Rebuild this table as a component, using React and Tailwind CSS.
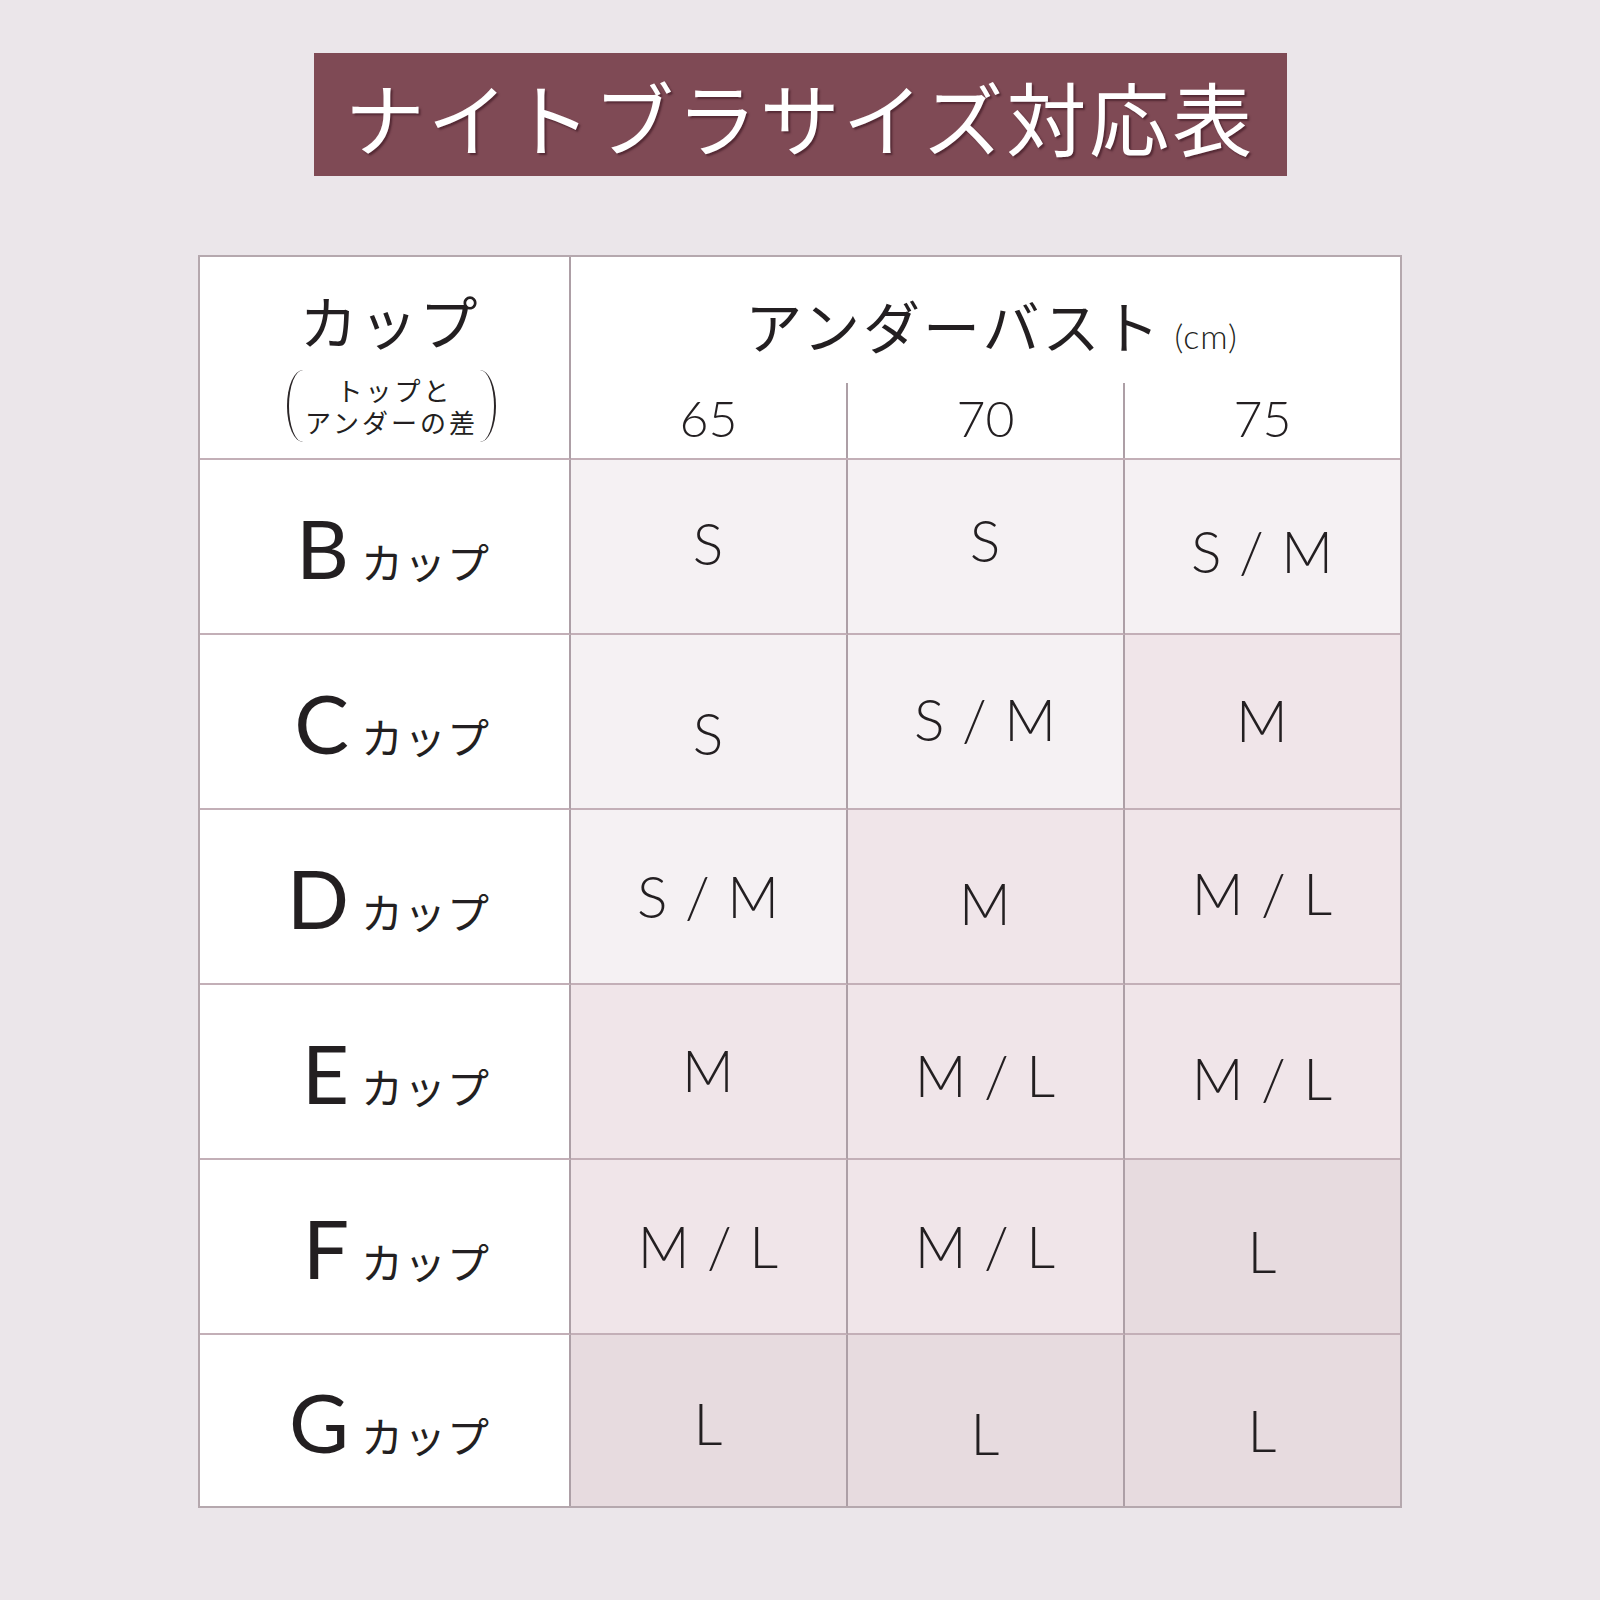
import React from "react";

const JP = { fontFamily: '"Noto Sans CJK JP", "Noto Sans", sans-serif' };
const LAT = { fontFamily: 'Lato, "Noto Sans CJK JP", sans-serif' };

const L1 = "bg-[#f5f1f3]";
const L2 = "bg-[#f0e5e9]";
const L3 = "bg-[#e7dbdf]";

const rows = [
  { cup: "B", cells: [["S", L1, "-translate-y-[3px]"], ["S", L1, "-translate-y-[6px]"], ["S / M", L1, "translate-y-[5px]"]], h: "h-[175px]" },
  { cup: "C", cells: [["S", L1, "translate-y-[12px]"], ["S / M", L1, "-translate-y-[2px]"], ["M", L2, "-translate-y-[1px]"]], h: "h-[175px]" },
  { cup: "D", cells: [["S / M", L1, "translate-y-[0px]"], ["M", L2, "translate-y-[7px]"], ["M / L", L2, "-translate-y-[3px]"]], h: "h-[175px]" },
  { cup: "E", cells: [["M", L2, "-translate-y-[1px]"], ["M / L", L2, "translate-y-[4px]"], ["M / L", L2, "translate-y-[7px]"]], h: "h-[175px]" },
  { cup: "F", cells: [["M / L", L2, "translate-y-[0px]"], ["M / L", L2, "translate-y-[0px]"], ["L", L3, "translate-y-[5px]"]], h: "h-[175px]" },
  { cup: "G", cells: [["L", L3, "translate-y-[3px]"], ["L", L3, "translate-y-[13px]"], ["L", L3, "translate-y-[10px]"]], h: "h-[171px]" },
];

const VB = "border-r-2 border-r-[#ad9fa6]";
const HB = "border-b-2 border-b-[#c3afb7]";

function Bracket({ side }) {
  return side === "left" ? (
    <div className="w-[16px] h-[72px] border-l-[2px] border-[#2a2527] rounded-l-[100%_50%]" />
  ) : (
    <div className="w-[16px] h-[72px] border-r-[2px] border-[#2a2527] rounded-r-[100%_50%]" />
  );
}

export default function App() {
  return (
    <div className="w-[1600px] h-[1600px] bg-[#ebe6ea] flex flex-col items-center text-[#231f21]">
      <div
        className="mt-[53px] w-[973px] h-[123px] bg-[#7f4a55] flex items-center justify-center text-white text-[80px] leading-none tracking-[3px]"
        style={{ ...JP, textShadow: "2px 2px 2px rgba(50,15,25,0.55)" }}
      >
        ナイトブラサイズ対応表
      </div>

      <div className="mt-[79px] w-[1204px] border-2 border-[#b5a8ae] bg-white grid grid-cols-[371px_277px_277px_275px]">
        {/* header first col */}
        <div className={`h-[203px] ${VB} ${HB} bg-white flex flex-col items-center`} style={JP}>
          <div className="mt-[34px] ml-[10px] text-[58px] leading-none tracking-[2px]">カップ</div>
          <div className="mt-[21px] ml-[14px] flex items-center gap-[2px]">
            <Bracket side="left" />
            <div className="flex flex-col items-center text-[26px] leading-[32px] tracking-[3px]">
              <span className="ml-[6px]">トップと</span>
              <span>アンダーの差</span>
            </div>
            <Bracket side="right" />
          </div>
        </div>
        {/* header right */}
        <div className={`col-span-3 h-[203px] ${HB} bg-white flex flex-col`}>
          <div className="h-[126px] flex items-end justify-center pb-[30px] pl-[12px]" style={JP}>
            <span className="text-[57px] leading-none tracking-[3px]">アンダーバスト</span>
            <span className="text-[34px] leading-none ml-[12px] tracking-[1px] font-light" style={LAT}>(cm)</span>
          </div>
          <div className="flex-1 grid grid-cols-[277px_277px_275px] text-[50px] leading-none font-light" style={LAT}>
            <div className={`${VB} flex items-center justify-center pb-[6px]`}>65</div>
            <div className={`${VB} flex items-center justify-center pb-[6px]`}>70</div>
            <div className="flex items-center justify-center pb-[6px]">75</div>
          </div>
        </div>

        {rows.map((r, ri) => {
          const last = ri === rows.length - 1;
          return (
            <React.Fragment key={r.cup}>
              <div className={`${r.h} ${VB} ${last ? "" : HB} bg-white flex items-center`}>
                <div className="flex items-baseline pl-[77px]">
                  <span className="w-[72px] text-right text-[82px] leading-none" style={LAT}>
                    {r.cup}
                  </span>
                  <span className="ml-[12px] text-[42px] leading-none tracking-[1px]" style={JP}>
                    カップ
                  </span>
                </div>
              </div>
              {r.cells.map(([t, bg, off], ci) => (
                <div
                  key={ci}
                  className={`${r.h} ${ci < 2 ? VB : ""} ${last ? "" : HB} ${bg} flex items-center justify-center`}
                >
                  <span className={`text-[57px] leading-none tracking-[1px] font-light ${off}`} style={LAT}>
                    {t}
                  </span>
                </div>
              ))}
            </React.Fragment>
          );
        })}
      </div>
    </div>
  );
}
